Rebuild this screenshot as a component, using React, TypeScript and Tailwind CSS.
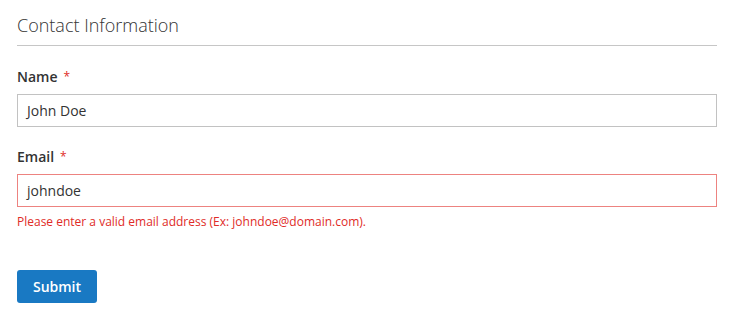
import React from "react";

export default function App() {
  return (
    <div
      className="w-[744px] h-[323px] bg-white px-[17px] pt-[13px]"
      style={{ fontFamily: '"Open Sans", sans-serif' }}
    >
      <div className="w-[700px]">
        <div className="text-[18px] font-light leading-[24px] text-[#333] pb-[8px] border-b border-[#c6c6c6]">
          Contact Information
        </div>
        <div className="mt-[21px] flex items-center text-[14px] font-semibold leading-[20px] text-[#333]">
          Name
          <span className="ml-[6px] text-[12px] font-normal text-[#e02b27]">*</span>
        </div>
        <div className="mt-[7px] h-[33px] border border-[#c2c2c2] flex items-center pl-[9px] text-[14px] text-[#333]">
          John Doe
        </div>
        <div className="mt-[20px] flex items-center text-[14px] font-semibold leading-[20px] text-[#333]">
          Email
          <span className="ml-[6px] text-[12px] font-normal text-[#e02b27]">*</span>
        </div>
        <div className="mt-[7px] h-[33px] border border-[#ed8380] flex items-center pl-[9px] text-[14px] text-[#333]">
          johndoe
        </div>
        <div className="mt-[7px] text-[12px] leading-[16px] text-[#e02b27]">
          Please enter a valid email address (Ex: johndoe@domain.com).
        </div>
        <button className="mt-[40px] w-[80px] h-[33px] rounded-[3px] bg-[#1979c3] text-white text-[14px] font-semibold">
          Submit
        </button>
      </div>
    </div>
  );
}
